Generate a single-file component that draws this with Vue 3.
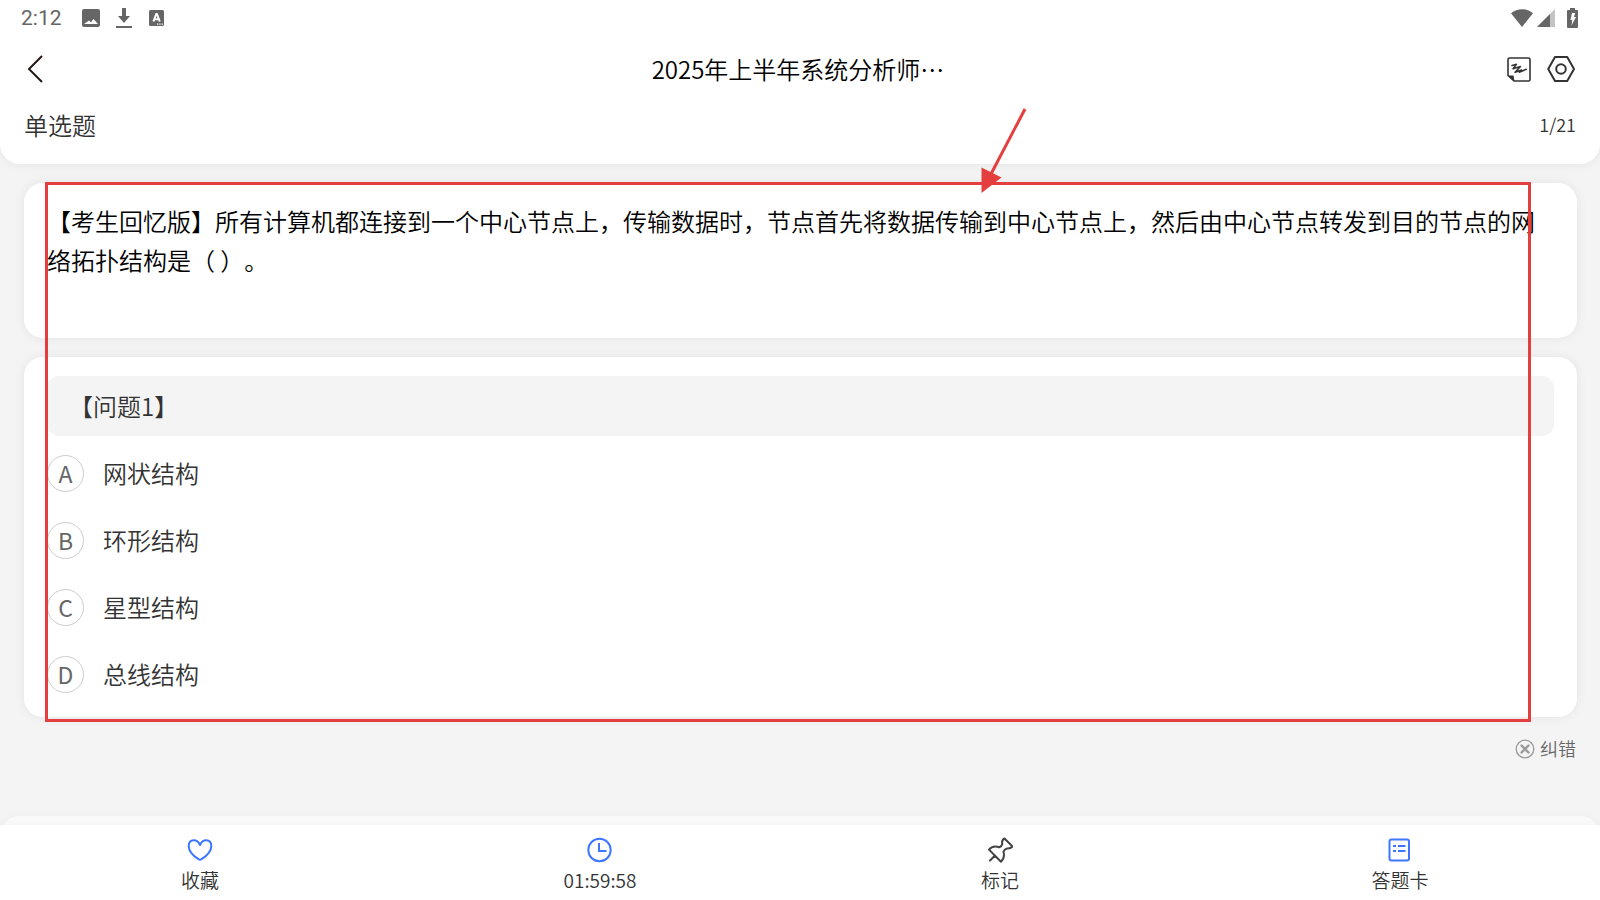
<template>
  <div class="exam-page">
    <header class="top">
      <div class="status-bar">
        <span class="status-time">2:12</span>
        <svg class="status-photo" width="18" height="18" viewBox="0 0 18 18">
          <path fill="#666" fill-rule="evenodd" d="M2 0h14a2 2 0 0 1 2 2v14a2 2 0 0 1-2 2H2a2 2 0 0 1-2-2V2a2 2 0 0 1 2-2zM2 15h14l-4.5-5-2.5 3.200-2-1.700z" />
        </svg>
        <svg class="status-download" width="16" height="22" viewBox="0 0 16 22">
          <path fill="#666" d="M6 1h4v8h4l-6 7-6-7h4zM0 19h16v2H0z" />
        </svg>
        <svg class="status-app" width="15" height="16" viewBox="0 0 15 16">
          <rect width="15" height="16" rx="1.5" fill="#666" />
          <path fill="none" stroke="#fff" stroke-width="2" d="M4.4 11.5L7.3 4h.6l2.9 7.5M5.3 9.3h4.6" />
          <path stroke="#fff" stroke-width="1.2" stroke-dasharray="1.3 1" d="M8 14.2h6" />
        </svg>
        <div class="status-right">
          <svg class="status-wifi" width="24" height="20" viewBox="0 0 24 20">
            <path fill="#666" d="M1 5.2C7.5-.2 16.5-.2 23 5.2L12 19z" />
          </svg>
          <svg class="status-signal" width="18" height="18" viewBox="0 0 18 18">
            <path fill="#c4c4c4" d="M0 18L18 0v18z" />
            <path fill="#666" d="M0 18L13 5v13z" />
          </svg>
          <svg class="status-battery" width="11" height="20" viewBox="0 0 11 20">
            <path fill="#666" d="M3 0h5v2h2a1 1 0 0 1 1 1v16a1 1 0 0 1-1 1H1a1 1 0 0 1-1-1V3a1 1 0 0 1 1-1h2z" />
            <path fill="#fff" d="M5 5h3.200L7 9h2L4.500 17.500l.8-5.500H3.500z" />
          </svg>
        </div>
      </div>

      <nav class="nav-bar">
        <button class="icon-btn" aria-label="返回">
          <svg width="24" height="30" viewBox="0 0 24 30">
            <path fill="none" stroke="#231815" stroke-width="2" d="M21 2L8 15l13 13" />
          </svg>
        </button>
        <h1>{{ title }}</h1>
        <div class="nav-actions">
          <button class="icon-btn" aria-label="草稿">
            <svg width="24" height="25" viewBox="0 0 24 25">
              <path fill="none" stroke="#333" stroke-width="1.6" stroke-linejoin="round" d="M2.500 1h19a1.500 1.500 0 0 1 1.500 1.500v20a1.500 1.500 0 0 1-1.500 1.500H7L1 18.500v-16A1.500 1.500 0 0 1 2.500 1z" />
              <path fill="#333" d="M1 18.500h5.500L7.500 24z" />
              <path fill="none" stroke="#333" stroke-width="1.5" stroke-linecap="round" stroke-linejoin="round" d="M5 8.500L9.500 7.200 6 11.800l7.500-2.300L8 15.300l6.500-2.300-2.200 2.300 7-3" />
            </svg>
          </button>
          <button class="icon-btn" aria-label="设置">
            <svg width="28" height="26" viewBox="0 0 28 26">
              <path fill="none" stroke="#333" stroke-width="2" stroke-linejoin="round" d="M8 1h12.200L27 13l-6.800 12H8L1.200 13z" />
              <circle cx="14" cy="13" r="4.8" fill="none" stroke="#333" stroke-width="2" />
            </svg>
          </button>
        </div>
      </nav>

      <div class="type-row">
        <h2>单选题</h2>
        <span class="progress">1/21</span>
      </div>
    </header>

    <main>
      <div class="sheet">
        <section class="card question">
          <p>{{ question }}</p>
        </section>

        <fieldset class="card answers">
          <legend class="part-title">【问题1】</legend>
          <label v-for="option in options" :key="option.key" class="option" :class="{ chosen: selected === option.key }">
            <span class="mark">
              <input type="radio" name="answer" :value="option.key" v-model="selected" />
              <span class="letter">{{ option.key }}</span>
            </span>
            <span class="option-text">{{ option.text }}</span>
          </label>
        </fieldset>

        <div class="frame"></div>
        <svg class="arrow" width="46" height="86" viewBox="0 0 46 86">
          <path stroke="#e53e3e" stroke-width="3" d="M44 1L10 66" />
          <path fill="#e53e3e" d="M.5 59.500l20 10L.5 85z" />
        </svg>
      </div>

      <button class="report">
        <svg width="20" height="20" viewBox="0 0 20 20">
          <circle cx="10" cy="10" r="8.8" fill="none" stroke="#999" stroke-width="1.3" />
          <path stroke="#999" stroke-width="2.4" stroke-linecap="round" d="M6.500 6.500l7 7M13.500 6.500l-7 7" />
        </svg>
        <span>纠错</span>
      </button>
    </main>

    <footer>
      <div class="tool-bar">
        <button class="tool">
          <svg width="26" height="26" viewBox="0 0 26 26">
            <path fill="none" stroke="#3f76ff" stroke-width="2" stroke-linejoin="round" d="M13 8C11.500 4.500 9 3.200 6.800 3.200 3.500 3.200 1.700 5.500 1.700 9c0 5.500 5 10.200 9.800 13.200 1.200.7 1.800.7 3 0 4.800-3 9.800-7.700 9.800-13.200 0-3.500-1.800-5.800-5.100-5.800-2.200 0-4.700 1.300-6.200 4.800z" />
          </svg>
          <span>收藏</span>
        </button>
        <button class="tool">
          <svg width="26" height="26" viewBox="0 0 26 26">
            <circle cx="12.5" cy="13" r="11.2" fill="none" stroke="#3f76ff" stroke-width="2" />
            <path fill="none" stroke="#3f76ff" stroke-width="2" d="M12 6v8h7.500" />
          </svg>
          <span>01:59:58</span>
        </button>
        <button class="tool">
          <svg width="26" height="26" viewBox="0 0 26 26">
            <path fill="none" stroke="#444" stroke-width="2" stroke-linejoin="round" stroke-linecap="round" d="M17.500 1.500l8 8c-1.500 1.800-3.500 2.200-5.500 2-1.200.2-3 2-3.500 3.200.8 3 .5 7.300-2.500 10.100L2 12.600c2.500-3.200 6.500-3.700 10.300-2.300 1.500-.5 2.700-2 3-3.300-.5-2 .2-4.500 2.200-5.500zM8 18.500L3 23.500" />
          </svg>
          <span>标记</span>
        </button>
        <button class="tool">
          <svg width="26" height="26" viewBox="0 0 26 26">
            <rect x="2.5" y="2.5" width="19.5" height="21" rx="2" fill="none" stroke="#3f76ff" stroke-width="2" />
            <path stroke="#3f76ff" stroke-width="2" d="M6 9h3M11 9h7.500M6 14h3M11 14h7.500" />
          </svg>
          <span>答题卡</span>
        </button>
      </div>
    </footer>
  </div>
</template>

<script setup>
import { ref } from 'vue';

const title = '2025年上半年系统分析师…';
const question = '【考生回忆版】所有计算机都连接到一个中心节点上，传输数据时，节点首先将数据传输到中心节点上，然后由中心节点转发到目的节点的网络拓扑结构是（ ）。';

const options = [
  { key: 'A', text: '网状结构' },
  { key: 'B', text: '环形结构' },
  { key: 'C', text: '星型结构' },
  { key: 'D', text: '总线结构' }
];

const selected = ref('');
</script>

<style>
body {
  margin: 0;
  background-color: #f4f4f4;
}
</style>

<style scoped>
.exam-page {
  display: flex;
  flex-direction: column;
  min-height: 100vh;
  color: #333;
  font-family: "Noto Sans CJK SC", sans-serif;
  font-size: 24px;
  font-weight: 350;
  text-spacing-trim: space-all;
}

h1,
h2,
p {
  margin: 0;
  font-size: 24px;
  font-weight: inherit;
}

button {
  padding: 0;
  border: none;
  background: none;
  color: inherit;
  font-family: inherit;
  font-weight: inherit;
  cursor: pointer;
}

svg {
  display: block;
  flex-shrink: 0;
}

.top {
  padding-bottom: 17px;
  border-radius: 0 0 20px 20px;
  background-color: #fff;
  box-shadow: 0 0 12px rgba(0, 0, 0, 0.07);
}

.status-bar {
  display: flex;
  align-items: center;
  height: 36px;
  padding: 0 21px;
}

.status-time {
  margin-right: 20px;
  color: #666;
  font-family: Roboto, sans-serif;
  font-size: 21px;
  font-weight: 400;
}

.status-download {
  margin: 0 17px 0 16px;
}

.status-right {
  display: flex;
  align-items: center;
  margin-left: auto;
}

.status-signal {
  margin: 0 12px 0 3px;
}

.status-battery {
  margin-right: 1px;
}

.nav-bar {
  display: grid;
  grid-template-columns: 1fr auto 1fr;
  align-items: center;
  height: 66px;
  padding: 0 25px 0 21px;
}

.nav-bar h1 {
  padding-bottom: 2px;
  color: #000;
}

.icon-btn {
  justify-self: start;
}

.nav-actions {
  display: flex;
  align-items: center;
  justify-content: flex-end;
  gap: 16px;
}

.type-row {
  display: flex;
  align-items: center;
  justify-content: space-between;
  height: 45px;
  padding: 0 24px;
}

.progress {
  padding-bottom: 2px;
  font-size: 18px;
}

main {
  padding: 19px 23px 0 24px;
}

.sheet {
  position: relative;
  display: flex;
  flex-direction: column;
  gap: 19px;
}

.card {
  min-width: 0;
  margin: 0;
  border: none;
  border-radius: 19px;
  background-color: #fff;
  box-shadow: 0 0 12px rgba(0, 0, 0, 0.07);
}

.question {
  padding: 18px 23px 59px;
  color: #000;
  line-height: 39px;
}

.answers {
  padding: 19px 23px 9px;
}

.part-title {
  float: left;
  box-sizing: border-box;
  width: 100%;
  margin-bottom: 4px;
  padding: 0 22px;
  border-radius: 12px;
  background-color: #f4f4f4;
  line-height: 60px;
}

.option {
  display: flex;
  clear: both;
  align-items: center;
  gap: 19px;
  height: 67px;
  cursor: pointer;
}

.mark {
  display: grid;
  place-items: center;
}

.mark input,
.letter {
  grid-area: 1 / 1;
}

.mark input {
  width: 37px;
  height: 37px;
  margin: 0;
  border: 1px solid #ccc;
  border-radius: 50%;
  appearance: none;
}

.letter,
.option-text {
  padding-bottom: 2px;
}

.letter {
  color: #666;
  font-size: 23px;
  font-weight: 400;
  pointer-events: none;
}

.chosen .mark input {
  border-color: #3f76ff;
  background-color: #3f76ff;
}

.chosen .letter {
  color: #fff;
}

/* red highlight over both cards */
.frame {
  position: absolute;
  top: -1px;
  right: 46px;
  bottom: -5px;
  left: 21px;
  border: 3px solid #e53e3e;
  pointer-events: none;
}

.arrow {
  position: absolute;
  top: -75px;
  left: 61.6%;
  pointer-events: none;
}

.report {
  display: flex;
  align-items: center;
  gap: 5px;
  margin: 18px 0 18px auto;
  padding-right: 1px;
  color: #666;
  font-size: 18px;
}

.report span {
  padding-bottom: 2px;
}

footer {
  margin-top: auto;
  padding-top: 9px;
  border-radius: 20px 20px 0 0;
  background-color: #fafafa;
  box-shadow: 0 0 12px rgba(0, 0, 0, 0.03);
}

.tool-bar {
  display: grid;
  grid-template-columns: repeat(4, 1fr);
  background-color: #fff;
  box-shadow: 0 0 8px rgba(0, 0, 0, 0.04);
}

.tool {
  display: flex;
  flex-direction: column;
  align-items: center;
  gap: 4px;
  height: 75px;
  padding-top: 12px;
  font-size: 19px;
  line-height: 26px;
}
</style>
